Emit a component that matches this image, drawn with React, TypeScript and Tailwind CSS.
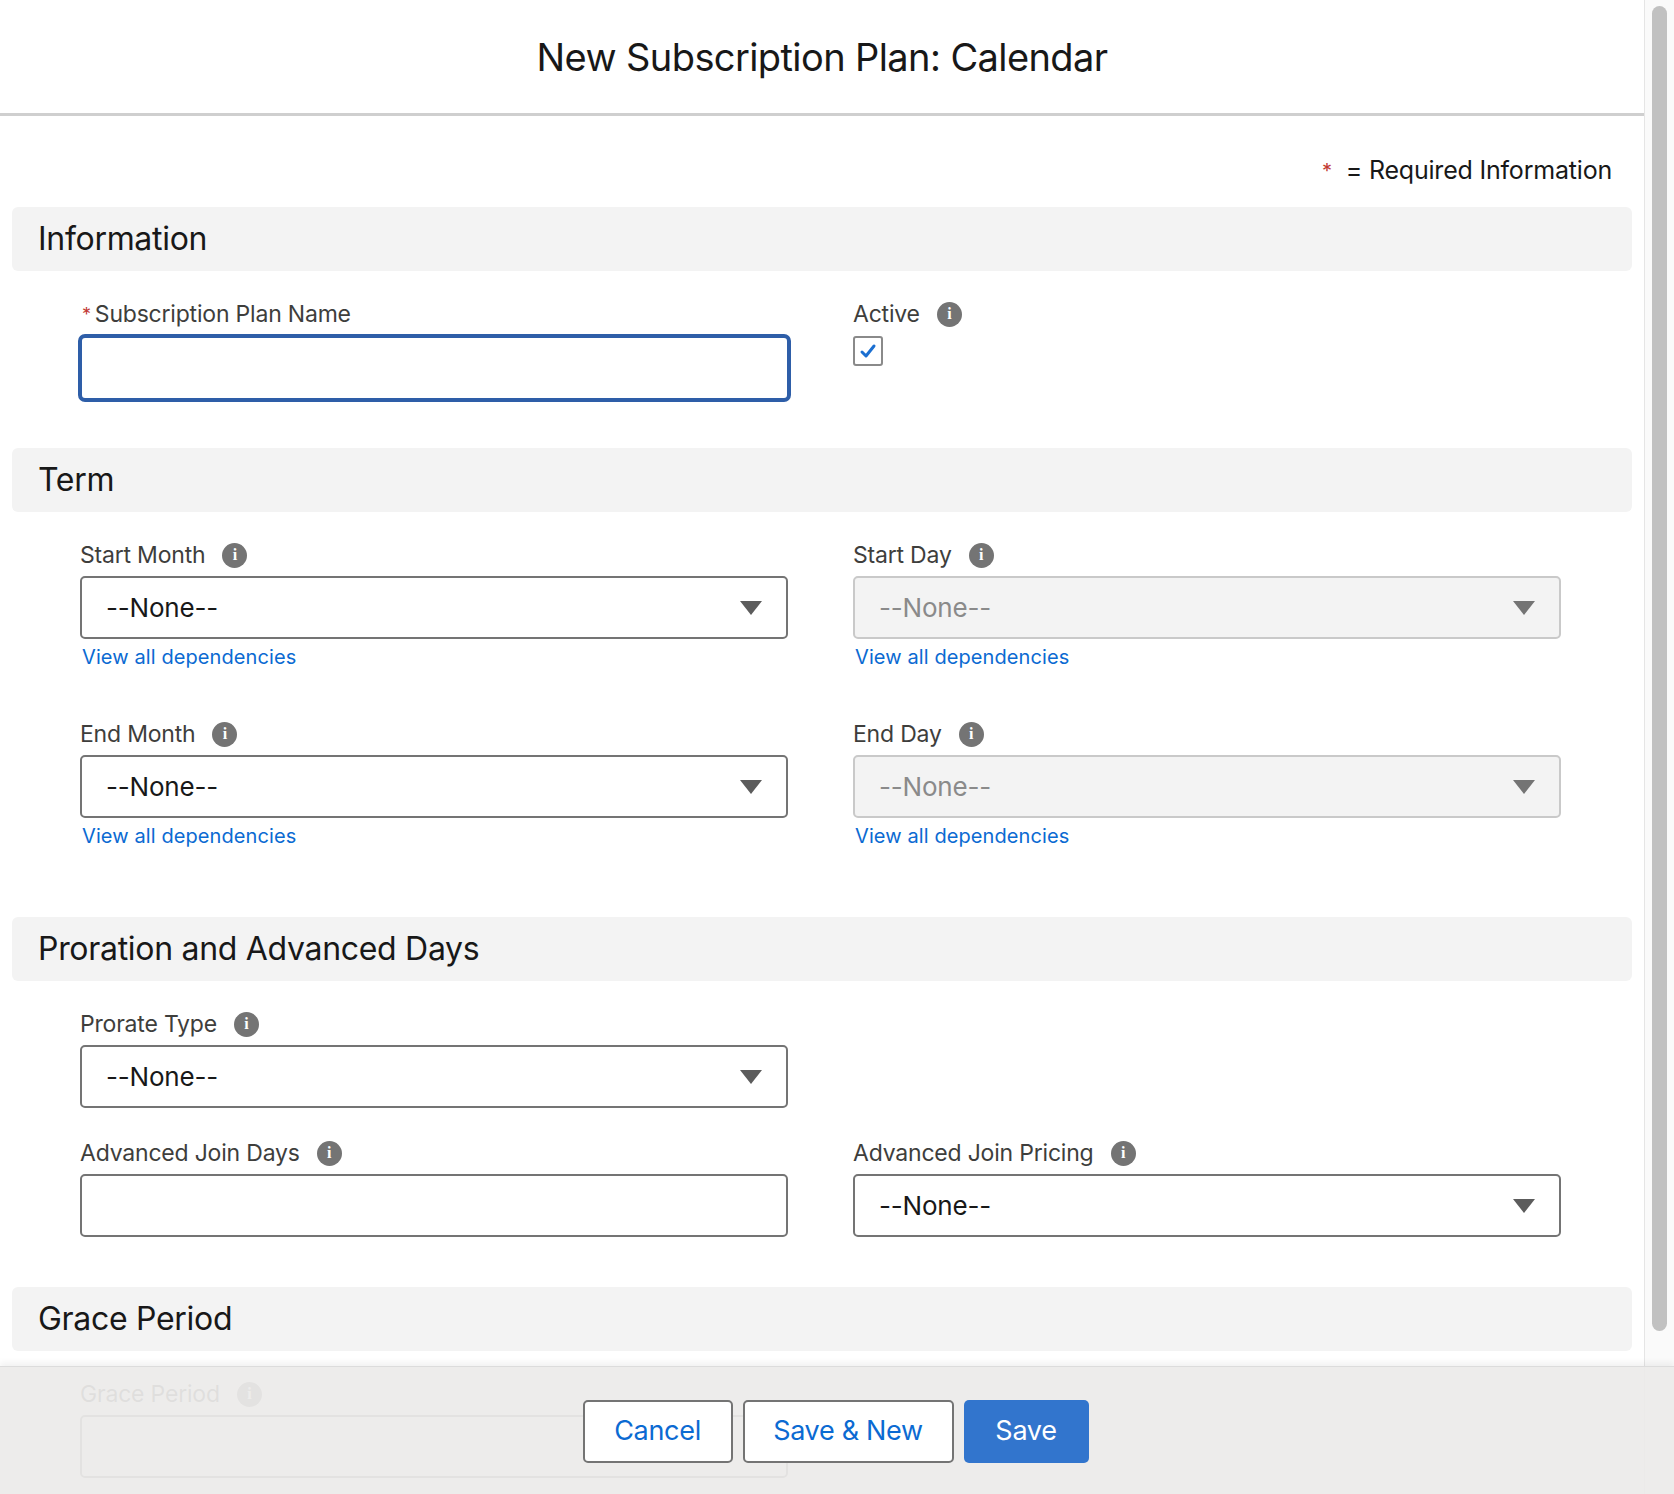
import React from 'react';

const font = { fontFamily: 'Inter, "Noto Sans", sans-serif' };

function InfoIcon() {
  return (
    <span className="ml-[17px] inline-flex h-[25px] w-[25px] items-center justify-center rounded-full bg-[#747474] text-[16px] font-bold leading-none text-white" style={{ fontFamily: '"Liberation Serif", serif' }}>
      i
    </span>
  );
}

function Label({ text, info = true, required = false }: { text: string; info?: boolean; required?: boolean }) {
  return (
    <div className="flex h-[28px] items-center text-[23px] tracking-[-0.2px] text-[#3e3e3c]">
      {required && <span className="mr-[4px] text-[18px] text-[#c23934]">*</span>}
      <span>{text}</span>
      {info && <InfoIcon />}
    </div>
  );
}

function Select({ disabled = false }: { disabled?: boolean }) {
  return (
    <div
      className={`mt-[7px] flex h-[63px] items-center justify-between rounded-[5px] border-2 px-[24px] text-[26px] tracking-[-0.2px] ${
        disabled ? 'border-[#c9c9c9] bg-[#f3f3f3] text-[#8a8a8a]' : 'border-[#747474] bg-white text-[#181818]'
      }`}
    >
      <span>--None--</span>
      <svg width="22" height="14" viewBox="0 0 22 14">
        <path d="M0 0 L22 0 L11 14 Z" fill={disabled ? '#747474' : '#5c5c5c'} />
      </svg>
    </div>
  );
}

function Deps() {
  return <div className="mt-[6px] h-[24px] pl-[2px] text-[20px] leading-[24px] tracking-[0.1px] text-[#0b6ad2]">View all dependencies</div>;
}

function Band({ title, mt }: { title: string; mt: string }) {
  return (
    <div className={`${mt} mx-[12px] flex h-[64px] items-center rounded-[6px] bg-[#f3f3f3] px-[26px] text-[32px] tracking-[-0.3px] text-[#181818]`}>
      {title}
    </div>
  );
}

function Grid({ children, mt }: { children: React.ReactNode; mt: string }) {
  return <div className={`${mt} grid grid-cols-[708px_708px] gap-x-[65px] pl-[80px]`}>{children}</div>;
}

export default function App() {
  return (
    <div className="relative flex h-[1494px] w-[1674px] overflow-hidden bg-white" style={font}>
      <div className="w-[1644px]">
        <div className="flex h-[116px] items-center justify-center border-b-[3px] border-[#cfcfcf] pt-[2px] text-[38px] tracking-[-0.6px] text-[#181818]">
          New Subscription Plan: Calendar
        </div>
        <div className="mt-[41px] flex h-[28px] items-center justify-end pr-[32px] text-[25px] tracking-[-0.2px] text-[#181818]">
          <span className="mr-[14px] text-[20px] text-[#c23934]">*</span>= Required Information
        </div>
        <Band title="Information" mt="mt-[22px]" />
        <Grid mt="mt-[29px]">
          <div className="-ml-[2px]">
            <div className="pl-[4px]">
              <Label text="Subscription Plan Name" info={false} required />
            </div>
            <div className="mt-[6px] h-[68px] w-[713px] rounded-[7px] border-[4px] border-[#2e5ea8] bg-white" />
          </div>
          <div>
            <Label text="Active" />
            <div className="mt-[8px] flex h-[30px] w-[30px] items-center justify-center rounded-[3px] border-2 border-[#8a8a8a]">
              <svg width="18" height="16" viewBox="0 0 18 16">
                <path d="M3 9 L7 13 L15 3" stroke="#1b6fd1" strokeWidth="3" fill="none" strokeLinecap="round" strokeLinejoin="round" />
              </svg>
            </div>
          </div>
        </Grid>
        <Band title="Term" mt="mt-[46px]" />
        <Grid mt="mt-[29px]">
          <div>
            <Label text="Start Month" />
            <Select />
            <Deps />
          </div>
          <div>
            <Label text="Start Day" />
            <Select disabled />
            <Deps />
          </div>
          <div className="mt-[51px]">
            <Label text="End Month" />
            <Select />
            <Deps />
          </div>
          <div className="mt-[51px]">
            <Label text="End Day" />
            <Select disabled />
            <Deps />
          </div>
        </Grid>
        <Band title="Proration and Advanced Days" mt="mt-[69px]" />
        <Grid mt="mt-[29px]">
          <div>
            <Label text="Prorate Type" />
            <Select />
          </div>
          <div />
          <div className="mt-[31px]">
            <Label text="Advanced Join Days" />
            <div className="mt-[7px] h-[63px] rounded-[5px] border-2 border-[#747474] bg-white" />
          </div>
          <div className="mt-[31px]">
            <Label text="Advanced Join Pricing" />
            <Select />
          </div>
        </Grid>
        <Band title="Grace Period" mt="mt-[50px]" />
        <Grid mt="mt-[29px]">
          <div>
            <Label text="Grace Period" />
            <div className="mt-[7px] h-[63px] rounded-[5px] border-2 border-[#747474] bg-white" />
          </div>
        </Grid>
      </div>
      <div className="w-[30px] border-l border-[#e5e5e5] bg-[#fafafa] pt-[6px]">
        <div className="ml-[7px] h-[1325px] w-[15px] rounded-full bg-[#c1c1c1]" />
      </div>
      <div className="absolute bottom-0 left-0 flex h-[128px] w-[1674px] items-start justify-center gap-[10px] border-t border-[#dcdcdc] bg-[#ecebea]/[0.93] pt-[33px] shadow-[0_-4px_6px_rgba(0,0,0,0.05)]">
        <div className="ml-[-3px] flex h-[63px] w-[150px] items-center justify-center rounded-[5px] border-2 border-[#747474] bg-white text-[27px] tracking-[-0.3px] text-[#0b6ad2]">Cancel</div>
        <div className="flex h-[63px] w-[211px] items-center justify-center rounded-[5px] border-2 border-[#747474] bg-white text-[27px] tracking-[-0.3px] text-[#0b6ad2]">Save &amp; New</div>
        <div className="flex h-[63px] w-[125px] items-center justify-center rounded-[5px] bg-[#3275cd] text-[27px] tracking-[-0.3px] text-white">Save</div>
      </div>
    </div>
  );
}
